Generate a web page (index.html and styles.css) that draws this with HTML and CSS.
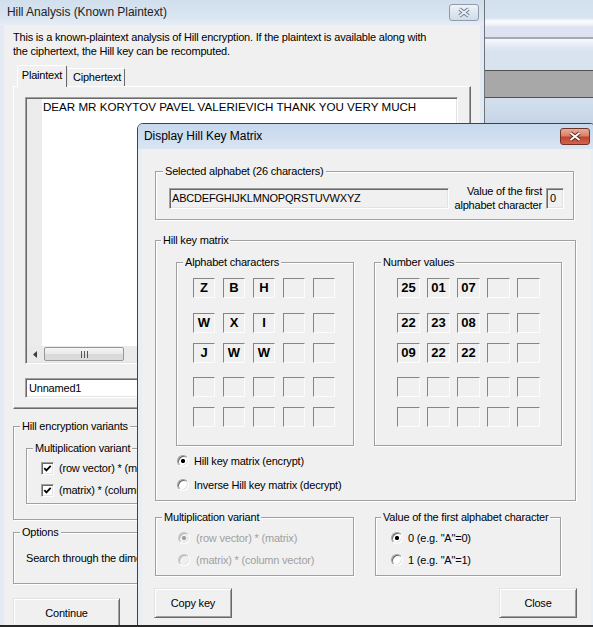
FILE: index.html
```html
<!DOCTYPE html>
<html>
<head>
<meta charset="utf-8">
<title>Hill Analysis</title>
<link rel="stylesheet" href="styles.css">
</head>
<body>
<div class="screen">
  <div class="win back">
    <div class="titlebar inactive">
      <span class="title">Hill Analysis (Known Plaintext)</span>
      <span class="closebtn gray"><svg width="28" height="15" viewBox="0 0 28 15"><path d="M9.5 4 L18.5 11 M18.5 4 L9.5 11" stroke="#6c7a8d" stroke-width="3.6" fill="none"/><path d="M9.5 4 L18.5 11 M18.5 4 L9.5 11" stroke="#eef2f7" stroke-width="1.8" fill="none"/></svg></span>
    </div>
    <div class="client back-client">
      <p class="intro">This is a known-plaintext analysis of Hill encryption. If the plaintext is available along with<br>the ciphertext, the Hill key can be recomputed.</p>
      <div class="tabs">
        <span class="tab sel">Plaintext</span>
        <span class="tab">Ciphertext</span>
      </div>
      <div class="tabpanel">
        <div class="memo sunken">
          <div class="memo-body">
            <div class="gutter"></div>
            <div class="memo-text">DEAR MR KORYTOV PAVEL VALERIEVICH THANK YOU VERY MUCH</div>
          </div>
          <div class="hscroll">
            <span class="arrowbtn"><svg width="4" height="7" viewBox="0 0 4 7"><path d="M4 0 L0 3.5 L4 7 Z" fill="#3c3c3c"/></svg></span>
            <span class="thumb"><span class="grip"></span></span>
          </div>
        </div>
        <div class="edit sunken name-edit">Unnamed1</div>
      </div>
      <fieldset class="grp variants">
        <legend>Hill encryption variants</legend>
        <fieldset class="grp mult-inner">
          <legend>Multiplication variant</legend>
          <div class="check-row first">
            <span class="chk sunken"><svg width="9" height="9" viewBox="0 0 9 9"><path d="M1.3 4.2 L3.4 6.4 L7.7 1.9" stroke="#000" stroke-width="1.8" fill="none"/></svg></span>
            <span>(row vector) * (matrix)</span>
          </div>
          <div class="check-row">
            <span class="chk sunken"><svg width="9" height="9" viewBox="0 0 9 9"><path d="M1.3 4.2 L3.4 6.4 L7.7 1.9" stroke="#000" stroke-width="1.8" fill="none"/></svg></span>
            <span>(matrix) * (column vector)</span>
          </div>
        </fieldset>
      </fieldset>
      <fieldset class="grp options">
        <legend>Options</legend>
        <div class="opt-text">Search through the dimensions</div>
      </fieldset>
      <button class="btn continue">Continue</button>
    </div>
  </div>

  <div class="win front">
    <div class="titlebar active">
      <span class="title">Display Hill Key Matrix</span>
      <span class="closebtn red"><svg width="28" height="15" viewBox="0 0 28 15"><path d="M9.5 4 L18.5 11 M18.5 4 L9.5 11" stroke="#5a2a22" stroke-width="3.6" fill="none"/><path d="M9.5 4 L18.5 11 M18.5 4 L9.5 11" stroke="#fff" stroke-width="1.8" fill="none"/></svg></span>
    </div>
    <div class="client front-client">
      <fieldset class="grp alpha-grp">
        <legend>Selected alphabet (26 characters)</legend>
        <div class="alpha-row">
          <div class="edit sunken ro alpha-edit">ABCDEFGHIJKLMNOPQRSTUVWXYZ</div>
          <div class="first-label">Value of the first<br>alphabet character</div>
          <div class="edit sunken ro small-edit">0</div>
        </div>
      </fieldset>

      <fieldset class="grp key-grp">
        <legend>Hill key matrix</legend>
        <div class="matrix-row">
          <fieldset class="grp letters">
            <legend>Alphabet characters</legend>
            <div class="crow"><span class="cell">Z</span><span class="cell">B</span><span class="cell">H</span><span class="cell"></span><span class="cell"></span></div>
            <div class="crow r2"><span class="cell">W</span><span class="cell">X</span><span class="cell">I</span><span class="cell"></span><span class="cell"></span></div>
            <div class="crow r3"><span class="cell">J</span><span class="cell">W</span><span class="cell">W</span><span class="cell"></span><span class="cell"></span></div>
            <div class="crow r4"><span class="cell"></span><span class="cell"></span><span class="cell"></span><span class="cell"></span><span class="cell"></span></div>
            <div class="crow r5"><span class="cell"></span><span class="cell"></span><span class="cell"></span><span class="cell"></span><span class="cell"></span></div>
          </fieldset>
          <fieldset class="grp numbers">
            <legend>Number values</legend>
            <div class="crow"><span class="cell">25</span><span class="cell">01</span><span class="cell">07</span><span class="cell"></span><span class="cell"></span></div>
            <div class="crow r2"><span class="cell">22</span><span class="cell">23</span><span class="cell">08</span><span class="cell"></span><span class="cell"></span></div>
            <div class="crow r3"><span class="cell">09</span><span class="cell">22</span><span class="cell">22</span><span class="cell"></span><span class="cell"></span></div>
            <div class="crow r4"><span class="cell"></span><span class="cell"></span><span class="cell"></span><span class="cell"></span><span class="cell"></span></div>
            <div class="crow r5"><span class="cell"></span><span class="cell"></span><span class="cell"></span><span class="cell"></span><span class="cell"></span></div>
          </fieldset>
        </div>
        <div class="radio-row key-r1"><span class="radio on"></span><span>Hill key matrix (encrypt)</span></div>
        <div class="radio-row key-r2"><span class="radio"></span><span>Inverse Hill key matrix (decrypt)</span></div>
      </fieldset>

      <div class="bottom-groups">
        <fieldset class="grp mult">
          <legend>Multiplication variant</legend>
          <div class="radio-row disabled"><span class="radio on dis"></span><span>(row vector) * (matrix)</span></div>
          <div class="radio-row disabled"><span class="radio dis"></span><span>(matrix) * (column vector)</span></div>
        </fieldset>
        <fieldset class="grp firstval">
          <legend>Value of the first alphabet character</legend>
          <div class="radio-row"><span class="radio on"></span><span>0 (e.g. "A"=0)</span></div>
          <div class="radio-row"><span class="radio"></span><span>1 (e.g. "A"=1)</span></div>
        </fieldset>
      </div>

      <div class="buttons">
        <button class="btn">Copy key</button>
        <button class="btn">Close</button>
      </div>
    </div>
  </div>
</div>
</body>
</html>
```
FILE: styles.css
```css
* { box-sizing: border-box; }
html, body { margin: 0; padding: 0; }
body {
  width: 593px;
  height: 627px;
  overflow: hidden;
  font: 11px/13px "Liberation Sans", Arial, sans-serif;
  letter-spacing: -0.2px;
  color: #000;
}
.screen {
  position: relative;
  width: 593px;
  height: 627px;
  overflow: hidden;
  border-bottom: 2px solid #262626;
  background: linear-gradient(to bottom,
    #d3e0ee 0px, #d7e3f0 18px, #fbfcfe 21px, #eef2f9 25px, #dde3f1 27px,
    #dde3f1 37px, #a3a8b2 37px, #a3a8b2 39px, #f7f9fc 39px, #e2e9f3 47px,
    #d9e3ef 51px, #d9e3ef 70px, #505050 70px, #505050 71px, #a8a8a8 71px,
    #a8a8a8 97px, #505050 97px, #505050 98px, #d3dfed 98px, #c6d5e7 123px);
}

/* windows */
.win { display: flex; flex-direction: column; }
.back {
  width: 485px;
  height: 625px;
  background: #e3eaf3;
  border-right: 1px solid #6f747b;
}
.front {
  position: absolute;
  left: 137px;
  top: 123px;
  width: 459px;
  height: 520px;
  border: 1px solid #3b434e;
  border-radius: 6px 6px 0 0;
  background: #e7eef6;
}
.titlebar {
  flex: none;
  height: 25px;
  display: flex;
  align-items: center;
  justify-content: space-between;
  font-size: 12px;
  letter-spacing: -0.05px;
}
.titlebar.inactive {
  padding: 0 5px 0 7px;
  background: linear-gradient(#d1deec, #dbe6f2 70%, #e6edf6);
  color: #222;
}
.titlebar.active {
  padding: 0 5px 0 6px;
  border-radius: 5px 5px 0 0;
  background: linear-gradient(#c8d9ed, #cfdeef 50%, #d9e5f2);
}
.closebtn {
  width: 30px;
  height: 17px;
  border-radius: 3px;
  border: 1px solid;
  display: block;
}
.closebtn svg { display: block; }
.closebtn.gray {
  border-color: #8d9bae;
  background: linear-gradient(#f1f4f8, #dfe6ef 50%, #d2dce8);
}
.closebtn.red {
  border-color: #6e3429;
  background: linear-gradient(#e8ab9a, #d8826c 45%, #c4432b 55%, #d0664d);
}
.client { flex: 1; background: #f0f0f0; margin: 0 4px; }

/* generic controls */
.sunken {
  border: 1px solid;
  border-color: #a0a0a0 #fff #fff #a0a0a0;
  box-shadow: inset 1px 1px 0 #696969, inset -1px -1px 0 #e3e3e3;
}
.edit {
  background: #fff;
  display: flex;
  align-items: center;
  white-space: nowrap;
  overflow: hidden;
}
.edit.ro { background: #f0f0f0; }
.grp {
  margin: 0;
  padding: 0;
  min-width: 0;
  border: 1px solid #a0a0a0;
  box-shadow: 1px 1px 0 #fff, inset 1px 1px 0 #fff;
}
.grp > legend {
  padding: 0 2px;
  line-height: 13px;
  background: #f0f0f0;
}
.btn {
  display: block;
  height: 30px;
  padding: 0;
  font: inherit;
  letter-spacing: inherit;
  color: #000;
  background: #f0f0f0;
  border: 1px solid;
  border-color: #e3e3e3 #696969 #696969 #e3e3e3;
  box-shadow: inset 1px 1px 0 #fff, inset -1px -1px 0 #a0a0a0;
}
.radio {
  flex: none;
  width: 12px;
  height: 12px;
  border-radius: 50%;
  border: 1px solid;
  border-color: #a0a0a0 #fff #fff #a0a0a0;
  box-shadow: inset 1px 1px 0 #696969, inset -1px -1px 0 #e3e3e3;
  background: #fff;
}
.radio.on { background: radial-gradient(circle, #000 0, #000 1.8px, #fff 2.4px); }
.radio.dis { background: #f0f0f0; border-color: #c8c8c8 #fff #fff #c8c8c8; box-shadow: inset 1px 1px 0 #b4b4b4, inset -1px -1px 0 #e3e3e3; }
.radio.on.dis { background: radial-gradient(circle, #a0a0a0 0, #a0a0a0 1.8px, #f0f0f0 2.4px); }
.radio-row {
  display: flex;
  align-items: center;
  height: 16px;
  white-space: nowrap;
}
.radio-row.disabled { color: #a0a0a0; }

/* back window content */
.back-client { padding-top: 5px; }
.intro { margin: 0 0 0 9px; line-height: 14px; white-space: nowrap; }
.tabs {
  display: flex;
  align-items: flex-end;
  height: 22px;
  margin-top: 7px;
  padding-left: 13px;
}
.tab {
  background: #f0f0f0;
  border: 1px solid;
  border-bottom: none;
  border-color: #fff #696969 transparent #fff;
  border-radius: 2px 2px 0 0;
  text-align: center;
  line-height: 14px;
  white-space: nowrap;
}
.tab.sel {
  position: relative;
  z-index: 1;
  width: 50px;
  height: 22px;
  padding-top: 2px;
}
.tab:not(.sel) {
  width: 58px;
  height: 18px;
  margin-bottom: 1px;
  padding-top: 1px;
  padding-left: 2px;
  border-left-color: #e3e3e3;
}
.tabpanel {
  margin: -1px 0 0 9px;
  width: 458px;
  border: 1px solid;
  border-color: #fff #696969 #696969 #fff;
  box-shadow: inset -1px -1px 0 #a0a0a0;
  padding: 10px 0 10px 11px;
}
.memo {
  width: 433px;
  height: 267px;
  padding: 1px;
  display: flex;
  flex-direction: column;
  background: #fff;
}
.memo-body { flex: 1; display: flex; }
.gutter { width: 15px; background: #ececec; }
.memo-text {
  flex: 1;
  padding: 1px 0 0 1px;
  font-size: 11.6px;
  line-height: 14px;
  letter-spacing: 0;
  white-space: nowrap;
}
.hscroll {
  flex: none;
  height: 16px;
  background: #eaeaea;
  display: flex;
  align-items: center;
}
.arrowbtn {
  width: 16px;
  height: 16px;
  display: flex;
  align-items: center;
  justify-content: center;
}
.arrowbtn svg { display: block; }
.thumb {
  margin-left: 1px;
  width: 80px;
  height: 14px;
  border: 1px solid #979797;
  border-radius: 2px;
  background: linear-gradient(#f5f5f5, #e9e9e9 50%, #d9d9d9 51%, #dcdcdc);
  display: flex;
  align-items: center;
  justify-content: center;
}
.grip {
  width: 7px;
  height: 7px;
  background: repeating-linear-gradient(to right, #555 0 1px, transparent 1px 3px);
}
.name-edit {
  margin-top: 14px;
  width: 433px;
  height: 20px;
  padding-left: 3px;
}
.grp.variants { margin: 11px 0 0 9px; width: 458px; padding: 0 0 15px 12px; }
.grp.variants > legend { margin-left: -6px; }
.grp.mult-inner { margin: 9px 0 0 0; width: 431px; padding: 0 0 5px 14px; }
.grp.mult-inner > legend { margin-left: -8px; }
.check-row {
  display: flex;
  align-items: center;
  height: 16px;
  margin-top: 6px;
  white-space: nowrap;
}
.check-row.first { margin-top: 5px; }
.chk {
  width: 13px;
  height: 13px;
  padding: 1px;
  background: #fff;
  margin-right: 5px;
}
.chk svg { display: block; }
.grp.options { margin: 6px 0 0 9px; width: 458px; padding: 0 0 18px 12px; }
.grp.options > legend { margin-left: -6px; }
.opt-text { margin-top: 12px; line-height: 14px; white-space: nowrap; }
.continue { margin: 14px 0 0 9px; width: 107px; }

/* front window content */
.front-client { padding-top: 16px; }
.grp.alpha-grp { margin-left: 13px; width: 419px; }
.grp.alpha-grp > legend { margin-left: 7px; }
.alpha-row {
  display: flex;
  align-items: center;
  height: 28px;
  margin: 6px 0 7px;
  padding: 0 9px 0 13px;
}
.alpha-edit { width: 280px; height: 21px; padding-left: 2px; }
.first-label {
  flex: 1;
  text-align: right;
  line-height: 14px;
  margin-right: 4px;
  white-space: nowrap;
}
.small-edit { width: 18px; height: 21px; padding-left: 3px; }
.grp.key-grp { margin: 14px 0 0 13px; width: 421px; padding: 0 0 7px 0; }
.grp.key-grp > legend { margin-left: 5px; }
.matrix-row {
  display: flex;
  gap: 20px;
  margin-top: 9px;
  padding-left: 20px;
}
.grp.letters { width: 178px; padding: 9px 0 18px 16px; }
.grp.numbers { width: 188px; padding: 9px 0 18px 22px; }
.grp.letters > legend { margin-left: -10px; }
.grp.numbers > legend { margin-left: -16px; }
.crow { display: flex; gap: 8px; }
.numbers .crow { gap: 7px; }
.crow.r2 { margin-top: 15px; }
.crow.r3 { margin-top: 10px; }
.crow.r4 { margin-top: 14px; }
.crow.r5 { margin-top: 10px; }
.cell {
  width: 22px;
  height: 20px;
  border: 1px solid;
  border-color: #858585 #fcfcfc #fcfcfc #858585;
  background: #f0f0f0;
  font-weight: bold;
  font-size: 13px;
  letter-spacing: 0;
  line-height: 18px;
  text-align: center;
}
.numbers .cell { width: 23px; }
.key-grp .radio-row { padding-left: 21px; gap: 5px; }
.key-r1 { margin-top: 7px; }
.key-r2 { margin-top: 8px; }
.bottom-groups {
  display: flex;
  gap: 21px;
  margin-top: 10px;
  padding-left: 13px;
}
.grp.mult { width: 199px; padding: 0 0 7px 22px; }
.grp.mult > legend { margin-left: -16px; }
.grp.firstval { width: 186px; padding: 0 0 7px 15px; }
.grp.firstval > legend { margin-left: -10px; }
.mult .radio-row, .firstval .radio-row { margin-top: 6px; }
.mult .radio-row { gap: 6px; }
.firstval .radio-row { gap: 5px; }
.buttons {
  display: flex;
  justify-content: space-between;
  width: 435px;
  margin-top: 12px;
  padding-left: 12px;
}
.buttons .btn { width: 78px; }
```
